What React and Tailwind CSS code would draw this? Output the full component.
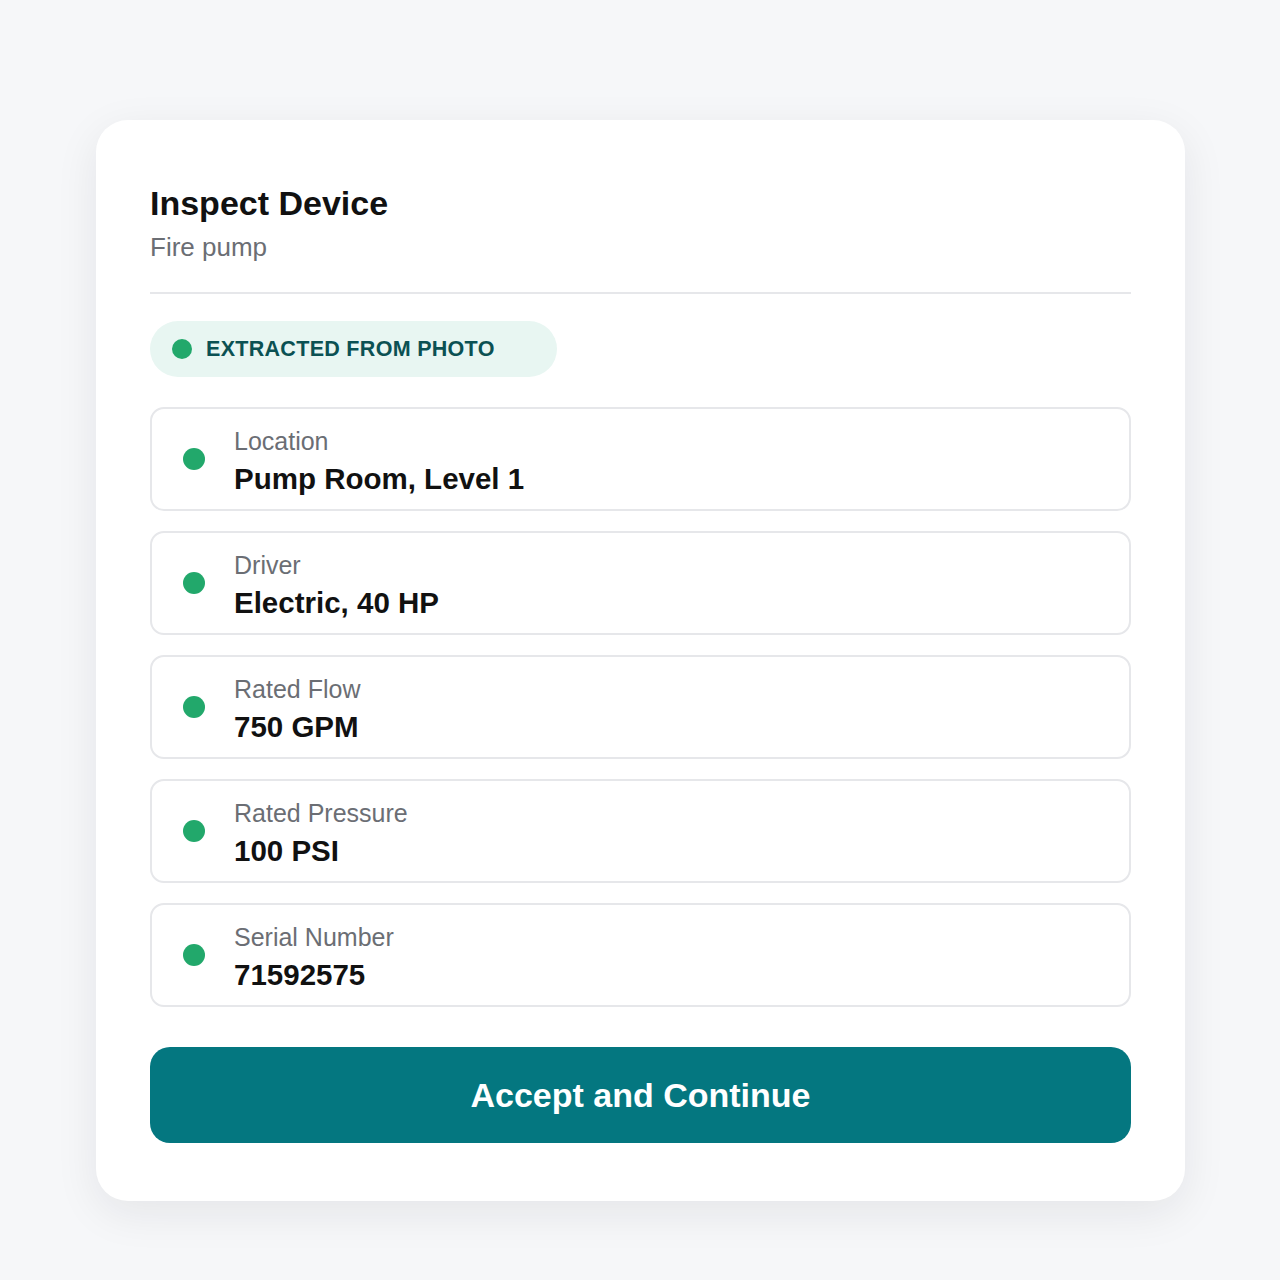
const fields = [
  { label: 'Location', value: 'Pump Room, Level 1' },
  { label: 'Driver', value: 'Electric, 40 HP' },
  { label: 'Rated Flow', value: '750 GPM' },
  { label: 'Rated Pressure', value: '100 PSI' },
  { label: 'Serial Number', value: '71592575' },
];

const FieldRow = ({ label, value }) => (
  <div className="flex items-center h-[104px] border-2 border-[#e6e7ea] rounded-[14px] pl-[31px]">
    <span className="w-[22px] h-[22px] rounded-full bg-[#22a86b] shrink-0" />
    <div className="ml-[29px] flex flex-col gap-[6px] pt-[3px]">
      <span className="text-[25px] leading-[30px] text-[#6b6e74]">{label}</span>
      <span className="text-[29.5px] leading-[34px] font-bold text-[#111111]">{value}</span>
    </div>
  </div>
);

export default function App() {
  return (
    <div
      className="min-h-screen bg-[#f6f7f9] pt-[120px] pb-[80px] pl-[96px] pr-[95px]"
      style={{ fontFamily: '"Liberation Sans", Arial, sans-serif' }}
    >
      <div className="bg-white rounded-[32px] shadow-[0_12px_44px_rgba(20,30,40,0.08)] px-[54px] pt-[63px] pb-[58px]">
        <h1 className="text-[34px] leading-[40px] font-bold text-[#111111]">Inspect Device</h1>
        <p className="mt-[9px] text-[26px] leading-[30px] text-[#6b6e74]">Fire pump</p>
        <div className="mt-[30px] h-[2px] bg-[#e6e7ea]" />

        <div className="mt-[27px] inline-flex items-center h-[56px] rounded-full bg-[#e8f6f2] pl-[22px] pr-[62px]">
          <span className="w-[20px] h-[20px] rounded-full bg-[#22a86b]" />
          <span className="ml-[14px] text-[21.5px] font-bold text-[#0b5153] tracking-[0.3px]">EXTRACTED FROM PHOTO</span>
        </div>

        <div className="mt-[30px] flex flex-col gap-[20px]">
          {fields.map((f) => (
            <FieldRow key={f.label} label={f.label} value={f.value} />
          ))}
        </div>

        <button className="mt-[40px] w-full h-[96px] rounded-[20px] bg-[#047780] text-white text-[34px] font-bold">
          Accept and Continue
        </button>
      </div>
    </div>
  );
}
